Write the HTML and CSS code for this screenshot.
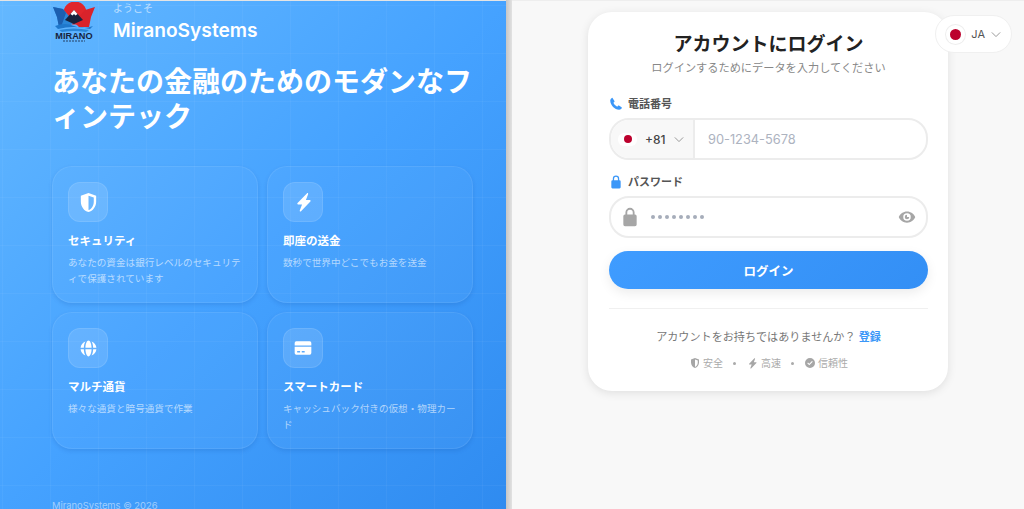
FILE: index.html
```html
<!DOCTYPE html>
<html lang="ja">
<head>
  <meta charset="UTF-8">
  <meta name="viewport" content="width=device-width, initial-scale=1.0">
  <title>MiranoSystems</title>
  <link rel="stylesheet" href="styles.css">
</head>
<body>

<div class="page">
  <!-- Panel izquierdo -->
  <section class="hero">
    <header class="brand">
      <svg class="logo" viewBox="0 0 44 40" width="44" height="40" aria-hidden="true">
        <circle cx="23" cy="11" r="11.500" fill="#e0262c"/>
        <path d="M1 5 11 7 22 20 17 25H7L5 15Z" fill="#2a86d8"/>
        <path d="M1 5 11 7 14 11 9 25H7L5 15Z" fill="#1c5fb0"/>
        <path d="M43 5 33 8 22 20 27 25H37L39 15Z" fill="#d9232b"/>
        <path d="M13 18 22 8 31 18 22 22Z" fill="#17233d"/>
        <path d="M18.500 12 22 8 25.500 12 23.500 13.500 22 12 20.500 13.500Z" fill="#fff"/>
        <path d="M3 24Q13 20 22 24T41 24L38 27Q22 23 6 27Z" fill="#1f78cc"/>
        <path d="M7 28Q22 25 37 28L34 30Q22 28 10 30Z" fill="#2a86d8"/>
        <text x="22" y="36.500" class="logo-text">MIRANO</text>
        <path d="M11 39H33" stroke="#17233d" stroke-width="0.800" stroke-dasharray="2 1"/>
      </svg>
      <div class="brand-text">
        <span class="welcome">ようこそ</span>
        <span class="brand-name">MiranoSystems</span>
      </div>
    </header>

    <h1 class="hero-title">あなたの金融のためのモダンなフィンテック</h1>

    <div class="features">
      <div class="card">
        <div class="card-icon">
          <svg viewBox="0 0 24 24" width="23" height="23"><path fill="#fff" fill-rule="evenodd" d="M12 2 4 5v6.100c0 5 3.400 9.700 8 10.900 4.600-1.200 8-5.900 8-10.900V5l-8-3zm0 3v14.900c3.300-1.100 5.500-4.800 5.500-8.800V6.800L12 5z"/></svg>
        </div>
        <h3>セキュリティ</h3>
        <p>あなたの資金は銀行レベルのセキュリティで保護されています</p>
      </div>
      <div class="card">
        <div class="card-icon">
          <svg viewBox="0 0 24 24" width="23" height="23"><path fill="#fff" d="M15.500 2.500 5.800 12.600c-.5.600-.2 1.400.6 1.400h4.100l-2.400 6.300c-.3.900.7 1.500 1.300.8l9.800-10.200c.5-.6.200-1.400-.6-1.400h-4.100l2.300-6.200c.3-.9-.7-1.500-1.300-.8z"/></svg>
        </div>
        <h3>即座の送金</h3>
        <p>数秒で世界中どこでもお金を送金</p>
      </div>
      <div class="card">
        <div class="card-icon">
          <svg viewBox="0 0 24 24" width="19" height="19"><path fill="#fff" d="M2 11h4.100c.1-3 .8-5.800 2-7.900C4.700 4.500 2.300 7.400 2 11zm6.100 0h7.800c-.1-4.500-1.800-9-3.900-9s-3.800 4.500-3.900 9zm9.800 0H22c-.3-3.600-2.700-6.500-6.100-7.900 1.200 2.100 1.900 4.900 2 7.900zM2 13c.3 3.600 2.700 6.500 6.100 7.900-1.200-2.100-1.900-4.900-2-7.900H2zm6.100 0c.1 4.500 1.800 9 3.900 9s3.800-4.500 3.900-9H8.100zm9.800 0c-.1 3-.8 5.800-2 7.900 3.400-1.400 5.800-4.300 6.100-7.900h-4.100z"/></svg>
        </div>
        <h3>マルチ通貨</h3>
        <p>様々な通貨と暗号通貨で作業</p>
      </div>
      <div class="card">
        <div class="card-icon">
          <svg viewBox="0 0 24 24" width="20" height="20"><path fill="#fff" fill-rule="evenodd" d="M4 4h16a2 2 0 0 1 2 2v3H2V6a2 2 0 0 1 2-2zM2 10.500h20V18a2 2 0 0 1-2 2H4a2 2 0 0 1-2-2v-7.500zM5 15.500v1.800h3.500v-1.800H5zm5.500 0v1.800H14v-1.800h-3.500z"/></svg>
        </div>
        <h3>スマートカード</h3>
        <p>キャッシュバック付きの仮想・物理カード</p>
      </div>
    </div>

    <footer class="hero-footer">MiranoSystems © 2026</footer>
  </section>

  <div class="divider"></div>

  <!-- Panel derecho -->
  <main class="side">
    <div class="lang">
      <span class="flag flag-lang"><i></i></span>
      <span class="lang-code">JA</span>
      <svg class="chevron" viewBox="0 0 12 8" width="10" height="7"><path d="M1 1.500 6 6.500l5-5" fill="none" stroke="#999" stroke-width="1.200"/></svg>
    </div>

    <form class="login">
      <h2>アカウントにログイン</h2>
      <p class="subtitle">ログインするためにデータを入力してください</p>

      <label class="field-label">
        <svg viewBox="0 0 24 24" width="14" height="14"><path fill="#3b97f8" d="M6.600 2.500 9.300 7c.3.500.2 1.100-.2 1.500L7.500 10c1.300 2.900 3.600 5.200 6.500 6.500l1.500-1.600c.4-.4 1-.5 1.500-.2l4.500 2.700c.6.300.8 1 .5 1.600-.9 1.900-2.700 3-4.800 2.900C9.800 21.500 2.500 14.200 2.100 6.300 2 4.200 3.100 2.400 5 1.500c.6-.3 1.300-.1 1.600 1z"/></svg>
        電話番号
      </label>
      <div class="input-wrap phone">
        <div class="dial">
          <span class="flag flag-dial"><i></i></span>
          <span class="dial-code">+81</span>
          <svg class="chevron" viewBox="0 0 12 8" width="10" height="7"><path d="M1 1.500 6 6.500l5-5" fill="none" stroke="#999" stroke-width="1.200"/></svg>
        </div>
        <span class="placeholder">90-1234-5678</span>
      </div>

      <label class="field-label">
        <svg viewBox="0 0 24 24" width="14" height="14"><path fill="#3b97f8" d="M12 1a5.500 5.500 0 0 0-5.500 5.500V9H6a2 2 0 0 0-2 2v10a2 2 0 0 0 2 2h12a2 2 0 0 0 2-2V11a2 2 0 0 0-2-2h-.5V6.500A5.500 5.500 0 0 0 12 1zm-3.300 8V6.500a3.300 3.300 0 0 1 6.600 0V9H8.700z"/></svg>
        パスワード
      </label>
      <div class="input-wrap password">
        <svg viewBox="0 0 24 24" width="20" height="20"><path fill="#a6a6a6" d="M12 1a5.500 5.500 0 0 0-5.500 5.500V9H6a2 2 0 0 0-2 2v10a2 2 0 0 0 2 2h12a2 2 0 0 0 2-2V11a2 2 0 0 0-2-2h-.5V6.500A5.500 5.500 0 0 0 12 1zm-3.300 8V6.500a3.300 3.300 0 0 1 6.600 0V9H8.700z"/></svg>
        <span class="dots"><i></i><i></i><i></i><i></i><i></i><i></i><i></i><i></i></span>
        <svg class="eye" viewBox="0 0 24 24" width="18" height="18"><path fill="#a6a6a6" fill-rule="evenodd" d="M12 4.500C7 4.500 2.700 7.600 1 12c1.700 4.400 6 7.500 11 7.500s9.300-3.100 11-7.500c-1.700-4.400-6-7.500-11-7.500zM12 17a5 5 0 1 1 0-10 5 5 0 0 1 0 10zm0-8a3 3 0 1 0 3 3h-3V9z"/></svg>
      </div>

      <button type="button" class="submit-btn">ログイン</button>

      <div class="rule"></div>

      <p class="signup">アカウントをお持ちではありませんか？ <a href="#">登録</a></p>

      <div class="badges">
        <span class="badge"><svg viewBox="0 0 24 24" width="12" height="12"><path fill="#a6a6a6" fill-rule="evenodd" d="M12 2 4 5v6.100c0 5 3.400 9.700 8 10.900 4.600-1.200 8-5.900 8-10.900V5l-8-3zm0 3v14.900c3.300-1.100 5.500-4.800 5.500-8.800V6.800L12 5z"/></svg>安全</span>
        <span class="sep"></span>
        <span class="badge"><svg viewBox="0 0 24 24" width="13" height="13"><path fill="#a6a6a6" d="M15.500 2.500 5.800 12.600c-.5.600-.2 1.400.6 1.400h4.100l-2.400 6.300c-.3.900.7 1.500 1.300.8l9.800-10.200c.5-.6.200-1.400-.6-1.400h-4.100l2.300-6.200c.3-.9-.7-1.500-1.300-.8z"/></svg>高速</span>
        <span class="sep"></span>
        <span class="badge"><svg viewBox="0 0 24 24" width="12" height="12"><path fill="#a6a6a6" fill-rule="evenodd" d="M12 2a10 10 0 1 0 0 20 10 10 0 0 0 0-20zm-1.500 14.500-4-4 1.500-1.500 2.500 2.500 5.500-5.500 1.500 1.500-7 7z"/></svg>信頼性</span>
      </div>
    </form>
  </main>
</div>

</body>
</html>
```

FILE: styles.css
```css
/* General */
html, body {
  margin: 0;
  padding: 0;
  height: 100%;
  overflow: hidden;
}
body {
  font-family: Inter, "Noto Sans CJK JP", sans-serif;
  background: #f8f8f8;
}
.page {
  display: flex;
  height: 509px;
}

/* Left panel */
.hero {
  width: 506px;
  flex: none;
  box-sizing: border-box;
  padding: 1px 33px 0 52px;
  border-top: 1px solid #e4e4e4;
  overflow: hidden;
  color: #fff;
  background-color: #45a2ff;
  background-image:
    linear-gradient(rgba(255,255,255,0.04) 1px, transparent 1px),
    linear-gradient(90deg, rgba(255,255,255,0.04) 1px, transparent 1px),
    linear-gradient(135deg, #64b8ff 0%, #45a2ff 50%, #2f8bf0 100%);
  background-size: 48px 48px, 48px 48px, 100% 100%;
  background-position: 0 4px, 2px 0, 0 0;
}
.brand {
  display: flex;
  align-items: flex-start;
  gap: 17px;
}
.logo {
  flex: none;
}
.logo-text {
  font-family: "Liberation Sans", sans-serif;
  font-size: 9.200px;
  font-weight: 700;
  fill: #17233d;
  text-anchor: middle;
}
.brand-text {
  display: flex;
  flex-direction: column;
}
.welcome {
  font-size: 10px;
  line-height: 12px;
  color: rgba(255,255,255,0.6);
}
.brand-name {
  margin-top: 4px;
  font-size: 19.200px;
  line-height: 24px;
  font-weight: 600;
}
.hero-title {
  margin: 23px 0 31px;
  font-size: 28px;
  line-height: 35px;
  font-weight: 700;
}
.features {
  display: grid;
  grid-template-columns: 206px 206px;
  grid-auto-rows: 137px;
  gap: 9px;
}
.card {
  box-sizing: border-box;
  padding: 15px;
  border: 1px solid rgba(255,255,255,0.08);
  border-radius: 20px;
  background: rgba(255,255,255,0.03);
  box-shadow: 0 2px 4px rgba(0,60,140,0.14);
}
.card-icon {
  display: flex;
  align-items: center;
  justify-content: center;
  width: 40px;
  height: 40px;
  box-sizing: border-box;
  border: 1px solid rgba(255,255,255,0.1);
  border-radius: 12px;
  background: rgba(255,255,255,0.12);
}
.card h3 {
  margin: 11px 0 0;
  font-size: 11.500px;
  line-height: 16px;
  font-weight: 700;
}
.card p {
  margin: 6px 0 0;
  font-size: 9.600px;
  line-height: 16px;
  color: rgba(255,255,255,0.6);
}
.hero-footer {
  margin-top: 50px;
  font-size: 9.400px;
  line-height: 14px;
  color: rgba(255,255,255,0.5);
}
.divider {
  width: 6px;
  flex: none;
  background: linear-gradient(90deg, #c6c6c6, #e2e2e2);
}

/* Right panel */
.side {
  position: relative;
  flex: 1;
  display: flex;
  justify-content: center;
  align-items: flex-start;
  padding-top: 11px;
  border-top: 1px solid #eee;
  box-sizing: border-box;
}
.lang {
  position: absolute;
  top: 14px;
  right: 12px;
  display: flex;
  align-items: center;
  gap: 6px;
  height: 38px;
  padding: 0 10px;
  box-sizing: border-box;
  background: #fff;
  border: 1px solid #f0f0f0;
  border-radius: 19px;
}
.lang-code {
  font-size: 11px;
  font-weight: 400;
  color: #555;
}
.flag {
  display: flex;
  align-items: center;
  justify-content: center;
  background: #fff;
  border-radius: 50%;
}
.flag i {
  display: block;
  border-radius: 50%;
  background: #bc002d;
}
.flag-lang {
  width: 19px;
  height: 19px;
  box-shadow: 0 0 0 1px #eee;
}
.flag-lang i {
  width: 11px;
  height: 11px;
}
.flag-dial {
  width: 19px;
  height: 13px;
  border-radius: 6px;
}
.flag-dial i {
  width: 8px;
  height: 8px;
}
.login {
  width: 360px;
  height: 379px;
  box-sizing: border-box;
  padding: 20px 20px 0 21px;
  background: #fff;
  border-radius: 24px;
  box-shadow: 0 2px 10px rgba(0,0,0,0.1);
  text-align: center;
}
.login h2 {
  margin: 0;
  font-size: 19px;
  line-height: 26px;
  font-weight: 700;
  color: #222;
}
.subtitle {
  margin: 2px 0 20px;
  font-size: 11.200px;
  line-height: 16px;
  color: #888;
}
.field-label {
  display: flex;
  align-items: center;
  gap: 5px;
  margin: 14px 0 6px;
  font-size: 11px;
  line-height: 16px;
  font-weight: 700;
  color: #555;
}
.input-wrap {
  display: flex;
  align-items: center;
  height: 42px;
  box-sizing: border-box;
  border: 2px solid #ececec;
  border-radius: 20px;
  overflow: hidden;
  background: #fff;
}
.dial {
  display: flex;
  align-items: center;
  gap: 8px;
  width: 84px;
  height: 100%;
  box-sizing: border-box;
  padding-left: 7px;
  background: #f8f8f8;
  border-right: 2px solid #ececec;
  flex: none;
}
.dial-code {
  font-size: 12px;
  font-weight: 500;
  color: #444;
}
.placeholder {
  padding-left: 13px;
  font-size: 12.800px;
  color: #adb3bf;
}
.password {
  padding: 0 10px 0 9px;
}
.dots {
  display: flex;
  gap: 3px;
  margin-left: 11px;
}
.dots i {
  width: 4px;
  height: 4px;
  border-radius: 50%;
  background: #a6adba;
}
.eye {
  margin-left: auto;
}
button.submit-btn {
  display: block;
  width: 100%;
  height: 38px;
  margin-top: 13px;
  padding: 0;
  border: none;
  border-radius: 20px;
  font-family: inherit;
  font-size: 12.500px;
  font-weight: 700;
  color: #fff;
  background: linear-gradient(135deg, #3f9cff, #338ff5);
  box-shadow: 0 4px 12px rgba(0,0,0,0.08);
}
.rule {
  height: 1px;
  margin-top: 19px;
  background: #f0f0f0;
}
.signup {
  margin: 20px 0 0;
  font-size: 11.100px;
  line-height: 16px;
  color: #777;
}
.signup a {
  color: #3b97f8;
  font-weight: 700;
  text-decoration: none;
}
.badges {
  display: flex;
  justify-content: center;
  align-items: center;
  gap: 10px;
  margin-top: 11px;
}
.badge {
  display: flex;
  align-items: center;
  gap: 2px;
  font-size: 10px;
  line-height: 14px;
  color: #aaa;
}
.sep {
  width: 3px;
  height: 3px;
  border-radius: 50%;
  background: #aaa;
}
```
